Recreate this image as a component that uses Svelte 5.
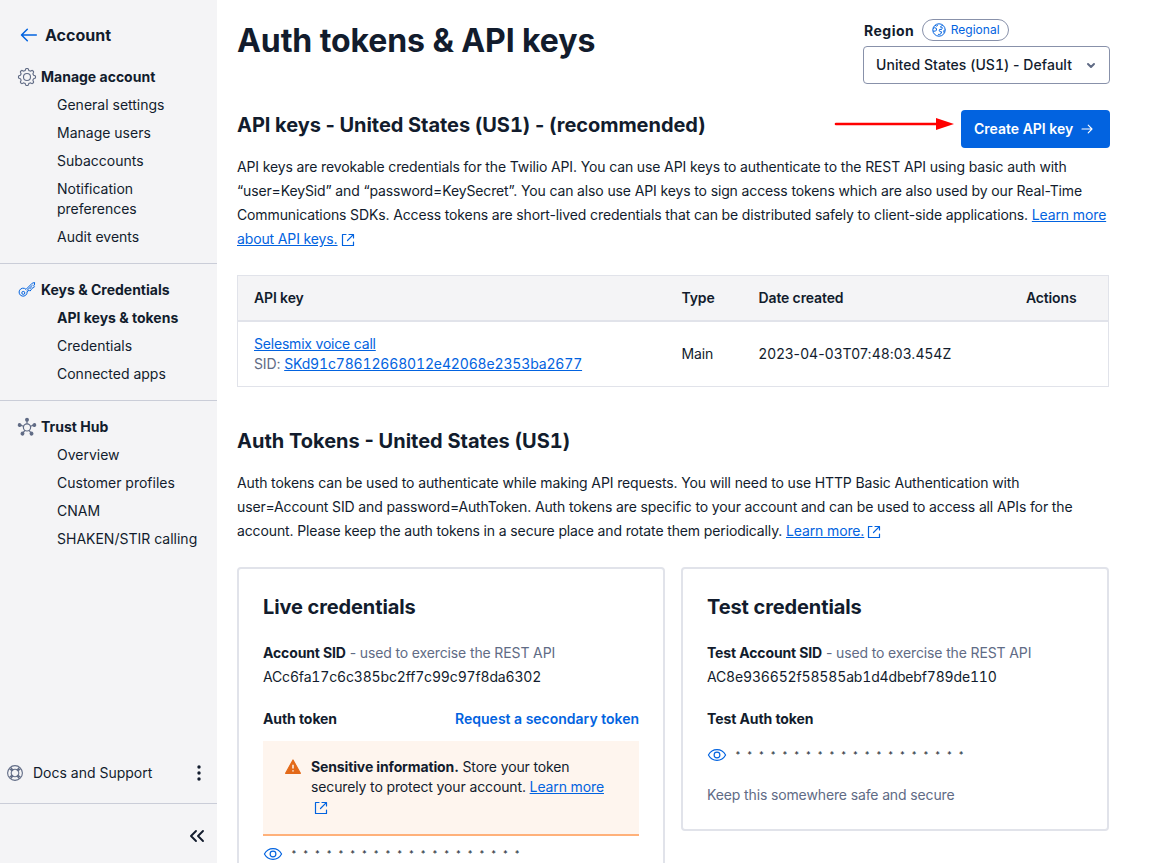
<script>
  const groups = [
    { title: 'Manage account', icon: 'gear', items: ['General settings', 'Manage users', 'Subaccounts', 'Notification preferences', 'Audit events'] },
    { title: 'Keys & Credentials', icon: 'key', items: ['API keys & tokens', 'Credentials', 'Connected apps'] },
    { title: 'Trust Hub', icon: 'hub', items: ['Overview', 'Customer profiles', 'CNAM', 'SHAKEN/STIR calling'] }
  ];
  const active = 'API keys & tokens';
  const gear = Array.from({ length: 97 }, (_, i) => {
    const a = (i / 96) * Math.PI * 2;
    const r = 7.6 + 0.95 * Math.tanh(2.2 * Math.cos(8 * a));
    return `${i ? 'L' : 'M'}${(10 + r * Math.sin(a)).toFixed(2)} ${(10 - r * Math.cos(a)).toFixed(2)}`;
  }).join('') + 'Z';
  const spokes = [0, 72, 144, 216, 288];
  const mask = Array(20).fill('*').join(' ');
</script>

{#snippet external()}
  <svg class="ext" width="20" height="20" viewBox="0 0 20 20" fill="none" stroke="currentColor"><path d="M8 4.5H4.5v11h11V12M11 4.5h4.5V8M15.3 4.7 9.5 10.5" stroke-width="1.2" stroke-linecap="round" stroke-linejoin="round" /></svg>
{/snippet}

{#snippet eye()}
  <svg class="eye" width="20" height="20" viewBox="0 0 20 20" fill="none" stroke="#0263e0" stroke-width="1.15"><path d="M1.4 10C5.3 2.9 14.7 2.9 18.6 10C14.7 17.1 5.3 17.1 1.4 10Z" stroke-linejoin="round" /><circle cx="10" cy="10" r="2.9" /></svg>
{/snippet}

<div class="page">
  <nav>
    <div class="account">
      <svg width="20" height="20" viewBox="0 0 20 20" fill="none" stroke="#0263e0" stroke-width="1.5" stroke-linecap="round" stroke-linejoin="round"><path d="M17.3 10H2.7M8.3 4.2 2.5 10l5.8 5.8" /></svg>
      <b>Account</b>
    </div>
    {#each groups as g}
      <section class="group">
        <div class="group-title">
          {#if g.icon === 'gear'}
            <svg width="20" height="20" viewBox="0 0 20 20" fill="none" stroke="#606b85" stroke-width="1.1"><path d={gear} /><circle cx="10" cy="10" r="3.5" /></svg>
          {:else if g.icon === 'key'}
            <svg width="20" height="20" viewBox="0 0 20 20" fill="none" stroke="#0263e0" stroke-width="1" stroke-linejoin="round"><path d="M9 9.4 15.2 3.2 17.6 2.5 17.4 5 16.6 5.8 17.4 6.8 15.8 8.4 14.9 7.5 13.6 8.8 14.4 9.7 12.9 11.1 12 10.2 10.1 11.9A4 4 0 1 1 9 9.4Z" /><circle cx="6.3" cy="12.9" r="1.5" /><path d="M9.6 10.8l5.9-5.7" /></svg>
          {:else}
            <svg width="20" height="20" viewBox="0 0 20 20" fill="none" stroke="#606b85" stroke-width="1.2"><circle cx="10" cy="10.4" r="3.6" />
              {#each spokes as a}
                <g transform="rotate({a} 10 10.4)"><path d="M10 6.8V3" /><circle cx="10" cy="2.7" r="1.35" fill="#606b85" /></g>
              {/each}
            </svg>
          {/if}
          <b>{g.title}</b>
        </div>
        {#each g.items as item}
          <a class:active={item === active}>{item}</a>
        {/each}
      </section>
    {/each}
    <div class="support">
      <svg width="20" height="20" viewBox="0 0 20 20" fill="none" stroke="#606b85"><circle cx="10" cy="10" r="7.4" stroke-width="1.1" /><circle cx="10" cy="10" r="3.8" stroke-width="1.1" /><path d="M4.6 6l3 2M6 4.6l2 3M14 4.6l-2 3M15.4 6l-3 2M15.4 14l-3-2M14 15.4l-2-3M6 15.4l2-3M4.6 14l3-2" stroke-width="1.5" /></svg>
      <span>Docs and Support</span>
      <svg class="more" width="20" height="20" viewBox="0 0 20 20" fill="#121c2d"><circle cx="10" cy="4" r="1.7" /><circle cx="10" cy="10" r="1.7" /><circle cx="10" cy="16" r="1.7" /></svg>
    </div>
    <div class="collapse">
      <svg width="20" height="20" viewBox="0 0 20 20" fill="none" stroke="#121c2d" stroke-width="1.9" stroke-linecap="round" stroke-linejoin="round"><path d="M9 5 4 10l5 5M16 5l-5 5 5 5" /></svg>
    </div>
  </nav>

  <main>
    <header>
      <h1>Auth tokens &amp; API keys</h1>
      <div class="region">
        <div class="region-label"><b>Region</b>
          <span class="pill"><svg width="16" height="16" viewBox="0 0 16 16" fill="none" stroke="#0263e0" stroke-width="1"><circle cx="8" cy="8" r="6.2" /><path d="M2 6.4l1.6-.7 1.7.6.2 1.7-1 1.1H2.2M4.1 3.3l1.7.9 1-.9M11.8 3.2 9.5 4.6l.6 1.2 2 .3M10.9 7.4H8.6l-.5 1.3 1 .9 1.4.2-.3 1.7-1.6.9H7.1M14 7.6l-1.2 1.2.2 2" /></svg>Regional</span>
        </div>
        <div class="select"><span>United States (US<span class="num">1</span>) - Default</span>
          <svg width="20" height="20" viewBox="0 0 20 20" fill="none" stroke="#606b85" stroke-width="2" stroke-linecap="round" stroke-linejoin="round"><path d="M7 9l3 3 3-3" /></svg>
        </div>
      </div>
    </header>

    <div class="keys-head">
      <h2>API keys - United States (US<span class="num">1</span>) - (recommended)</h2>
      <svg class="pointer" width="120" height="14" viewBox="0 0 120 14"><path d="M2 7h102" stroke="#f00" stroke-width="2.6" stroke-linecap="round" /><path d="M102 1l18 6-18 6z" fill="#f00" /></svg>
      <button>Create API key
        <svg width="16" height="16" viewBox="0 0 16 16" fill="none" stroke="#fff" stroke-width="1.1" stroke-linecap="round" stroke-linejoin="round"><path d="M3 8h9.7M9.2 4.2 13 8l-3.8 3.8" /></svg>
      </button>
    </div>
    <p class="intro">API keys are revokable credentials for the Twilio API. You can use API keys to authenticate to the REST API using basic auth with “user=KeySid” and “password=KeySecret”. You can also use API keys to sign access tokens which are also used by our Real-Time Communications SDKs. Access tokens are short-lived credentials that can be distributed safely to client-side applications. <a class="link">Learn more about API keys.</a>{@render external()}</p>

    <div class="table">
      <div class="row head"><span>API key</span><span>Type</span><span>Date created</span><span class="right">Actions</span></div>
      <div class="row body">
        <div><a class="link name">Selesmix voice call</a><br /><span class="weak">SID:</span>{' '}<a class="link code">SKd91c78612668012e42068e2353ba2677</a></div>
        <span>Main</span><span class="date">2023-04-03T07:48:03.454Z</span><span></span>
      </div>
    </div>

    <h2 class="auth">Auth Tokens - United States (US<span class="num">1</span>)</h2>
    <p class="tokens">Auth tokens can be used to authenticate while making API requests. You will need to use HTTP Basic Authentication with user=Account SID and password=AuthToken. Auth tokens are specific to your account and can be used to access all APIs for the account. Please keep the auth tokens in a secure place and rotate them periodically. <a class="link">Learn more.</a>{@render external()}</p>

    <div class="cards">
      <article class="live">
        <h2>Live credentials</h2>
        <div class="sid"><b>Account SID</b> <span class="weak">- used to exercise the REST API</span><br /><span class="code">ACc6fa17c6c385bc2ff7c99c97f8da6302</span></div>
        <div class="token-head"><b>Auth token</b><a>Request a secondary token</a></div>
        <div class="warning">
          <svg width="20" height="20" viewBox="0 0 20 20"><path d="M10 3 17.4 16.3H2.6Z" fill="#e36a19" stroke="#e36a19" stroke-width="1.2" stroke-linejoin="round" /><path d="M10 7.8v3.7M10 13.2v1.4" stroke="#fef5ee" stroke-width="1.5" /></svg>
          <div><b>Sensitive information.</b> Store your token securely to protect your account. <a class="link">Learn more</a> {@render external()}</div>
        </div>
        <div class="secret">{@render eye()}<span>{mask}</span></div>
      </article>
      <article class="test">
        <h2>Test credentials</h2>
        <div class="sid"><b>Test Account SID</b> <span class="weak">- used to exercise the REST API</span><br /><span class="code">AC8e936652f58585ab1d4dbebf789de110</span></div>
        <div class="token-head"><b>Test Auth token</b></div>
        <div class="secret">{@render eye()}<span>{mask}</span></div>
        <div class="weak note">Keep this somewhere safe and secure</div>
      </article>
    </div>
  </main>
</div>

<style>
  :global(body) { overflow: hidden; background: #fff; }
  * { box-sizing: border-box; }
  .page { display: flex; width: 1164px; height: 863px; overflow: hidden; font: 14px/20px Inter, sans-serif; color: #121c2d; }
  b { font-weight: 700; }
  svg { flex: none; }
  h1, h2, p { margin: 0; }
  nav { width: 217px; flex: none; background: #f4f4f6; display: flex; flex-direction: column; }
  .account { display: flex; align-items: center; gap: 6px; padding: 25px 0 0 19px; margin-bottom: 22px; font-size: 16px; }
  .group { display: flex; flex-direction: column; gap: 8px; padding-bottom: 16px; border-bottom: 1px solid #cacdd8; margin-bottom: 16px; }
  .group:last-of-type { border: 0; }
  .group-title { display: flex; gap: 4px; padding-left: 17px; }
  .group a { padding: 0 12px 0 57px; }
  .group a.active { font-weight: 700; }
  .support { margin-top: auto; height: 61px; padding: 0 8px 0 5px; display: flex; align-items: center; gap: 8px; border-bottom: 1px solid #cacdd8; }
  .more { margin-left: auto; }
  .collapse { height: 59px; padding: 22px 10px 0 0; display: flex; justify-content: flex-end; }

  main { width: 873px; margin-left: 20px; flex: none; letter-spacing: -0.13px; }
  header { display: flex; justify-content: space-between; height: 110px; }
  h1 { font-size: 32px; line-height: 44px; font-weight: 700; padding-top: 19px; letter-spacing: -0.09px; }
  .region { width: 247px; padding-top: 19px; letter-spacing: 0; }
  .region-label { display: flex; align-items: center; height: 22px; gap: 8px; }
  .region-label b { padding: 2px 0 0 1px; letter-spacing: 0.5px; margin-right: -0.5px; }
  .pill { display: flex; align-items: center; gap: 4px; height: 22px; padding: 0 8px; border: 1px solid #8891aa; border-radius: 11px; font-size: 12px; color: #0263e0; }
  .select { display: flex; align-items: center; justify-content: space-between; height: 38px; margin-top: 5px; padding: 0 8px 0 12px; border: 1px solid #8891aa; border-radius: 4px; font-weight: 500; letter-spacing: 0.05px; }
  h2 { font-size: 20px; line-height: 28px; font-weight: 700; letter-spacing: -0.05px; }
  .num { font-variant-numeric: tabular-nums; }
  .keys-head { display: flex; height: 38px; }
  .keys-head h2 { padding-top: 1px; }
  .pointer { margin: 7px 7px 0 auto; }
  button { width: 149px; height: 38px; display: flex; align-items: center; justify-content: space-between; padding: 0 15px 0 13px; border: 0; border-radius: 4px; background: #0263e0; color: #fff; font: 600 14px/20px Inter, sans-serif; }
  p { line-height: 24px; }
  .intro { margin-top: 7px; }
  .link { color: #0263e0; text-decoration: underline; }
  .ext { color: #0263e0; vertical-align: -6px; }
  .weak { color: #606b85; }
  .table { width: 872px; height: 112px; margin-top: 24px; border: 1px solid #e1e3ea; }
  .row { display: grid; grid-template-columns: 427.5px 77px 200px 1fr; padding: 0 31.5px 0 16px; align-items: center; }
  .head { height: 46px; background: #f4f4f6; border-bottom: 2px solid #e1e3ea; font-weight: 600; }
  .body { height: 64px; }
  .name { letter-spacing: -0.2px; }
  .date { letter-spacing: 0.13px; white-space: nowrap; }
  .code { letter-spacing: -0.16px; font-variant-numeric: tabular-nums; }
  .right { text-align: right; }
  .auth { margin: 40px 0 16px; letter-spacing: 0; }
  .cards { display: grid; grid-template-columns: 428px 428px; gap: 16px; align-items: start; margin-top: 24px; }
  article { border: 2px solid #e1e3ea; border-radius: 4px; padding: 24px; }
  article h2 { letter-spacing: -0.1px; }
  .live { height: 400px; }
  .test { height: 264px; }
  .sid { line-height: 24px; margin-top: 20px; }
  .token-head { display: flex; justify-content: space-between; margin-top: 20px; letter-spacing: -0.08px; }
  .token-head a { color: #0263e0; font-weight: 600; letter-spacing: 0; }
  .warning { display: flex; gap: 8px; height: 95px; margin-top: 12px; padding: 16px 20px; background: #fef5ee; border-bottom: 2px solid #ffb17a; }
  .secret { display: flex; gap: 8px; margin-top: 8px; }
  .secret span { font-size: 9px; letter-spacing: 1.75px; font-variant-numeric: tabular-nums; }
  .test .secret { margin-top: 16px; }
  .note { margin-top: 20px; }
</style>
